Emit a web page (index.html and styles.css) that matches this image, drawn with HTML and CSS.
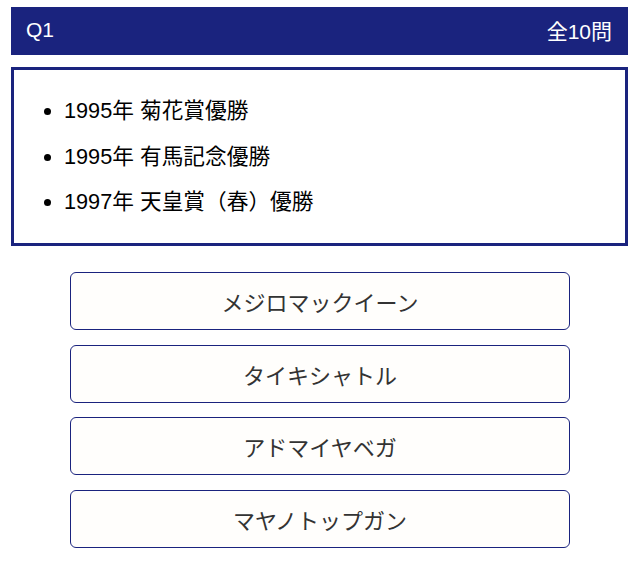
FILE: index.html
```html
<!DOCTYPE html>
<html lang="ja">
<head>
<meta charset="utf-8">
<title>Quiz</title>
<link rel="stylesheet" href="styles.css">
</head>
<body>
<div class="page">
  <header class="bar">
    <span class="qno">Q1</span>
    <span class="total">全10問</span>
  </header>
  <section class="hints">
    <ul class="hint-list">
      <li>1995年 菊花賞優勝</li>
      <li>1995年 有馬記念優勝</li>
      <li>1997年 天皇賞（春）優勝</li>
    </ul>
  </section>
  <div class="choices">
    <button class="choice">メジロマックイーン</button>
    <button class="choice">タイキシャトル</button>
    <button class="choice">アドマイヤベガ</button>
    <button class="choice">マヤノトップガン</button>
  </div>
</div>
</body>
</html>
```
FILE: styles.css
```css
html, body {
  margin: 0;
  padding: 0;
  background: #ffffff;
}
body {
  font-family: "Liberation Sans", Arial, "Noto Sans CJK JP", sans-serif;
}
.page {
  padding: 7px 12px 0 11px;
}
.bar {
  display: flex;
  justify-content: space-between;
  align-items: center;
  height: 48px;
  background: #1a237e;
  color: #ffffff;
  font-size: 21px;
  padding: 0 16px 2px 15px;
  box-sizing: border-box;
}
.hints {
  margin-top: 12px;
  border: 3px solid #1a237e;
  padding: 18px 10px 18.5px;
}
.hint-list {
  margin: 0;
  padding-left: 40px;
  font-size: 21.7px;
  color: #000;
}
.hint-list li {
  line-height: 45.5px;
}
.choices {
  margin-top: 26px;
  display: flex;
  flex-direction: column;
  align-items: center;
  gap: 14.5px;
  margin-left: -11px;
  margin-right: -12px;
}
.choice {
  width: 500px;
  height: 58px;
  box-sizing: border-box;
  border: 1px solid #1a237e;
  border-radius: 6px;
  background: #fffefc;
  color: #333333;
  font-family: "Noto Sans CJK JP", sans-serif;
  font-size: 22px;
  padding: 0;
}
```
